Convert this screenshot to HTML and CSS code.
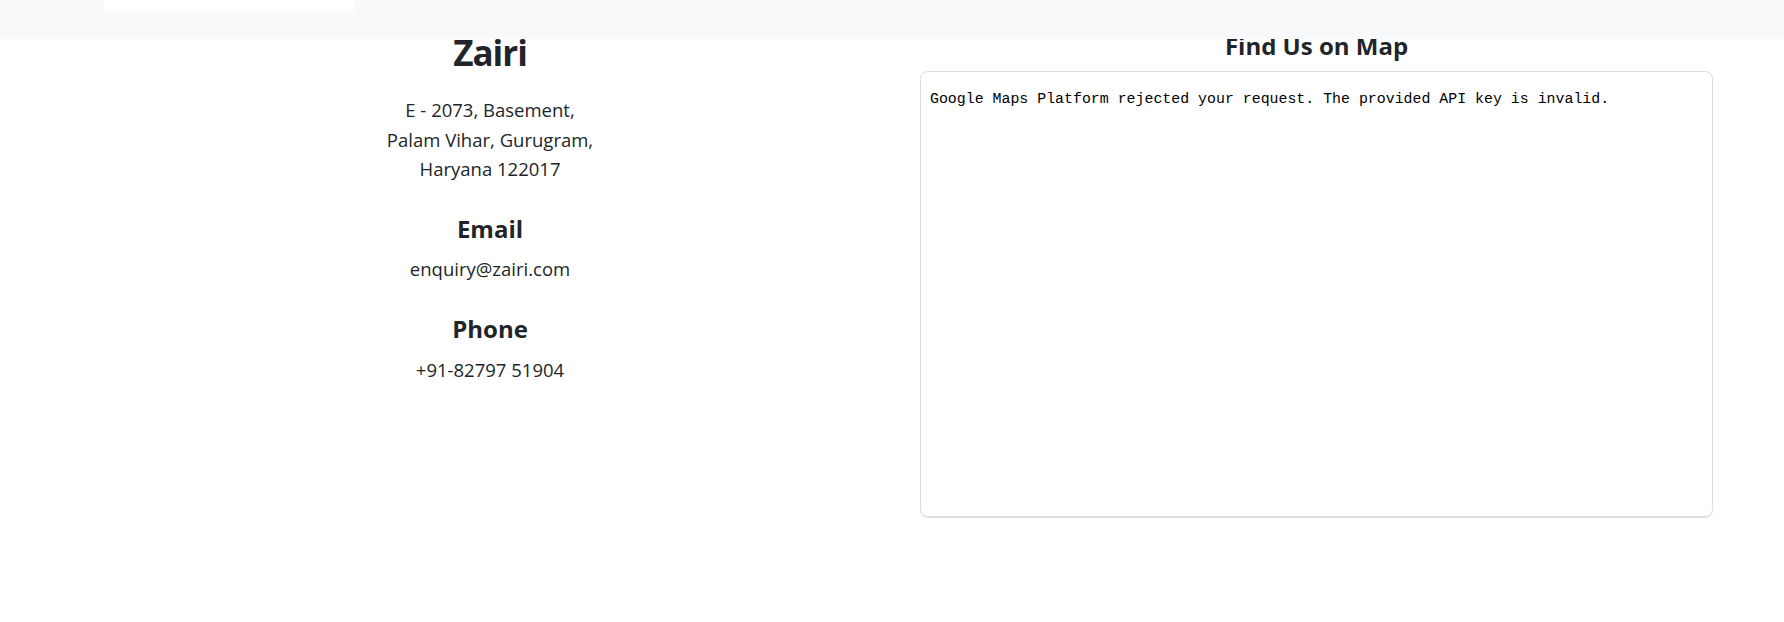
FILE: index.html
```html
<!DOCTYPE html>
<html lang="en">
<head>
<meta charset="utf-8">
<title>Contact - Zairi</title>
<link rel="stylesheet" href="styles.css">
</head>
<body>
<header class="topband">
  <div class="card-tail"></div>
</header>
<section class="contact">
  <div class="info">
    <h1 class="brand">Zairi</h1>
    <p class="text">E - 2073, Basement,<br>Palam Vihar, Gurugram,<br>Haryana 122017</p>
    <h4 class="label">Email</h4>
    <p class="text">enquiry@zairi.com</p>
    <h4 class="label">Phone</h4>
    <p class="text">+91-82797 51904</p>
  </div>
  <div class="map">
    <h3 class="label">Find Us on Map</h3>
    <div class="map-frame">
      <pre class="map-error">Google Maps Platform rejected your request. The provided API key is invalid.</pre>
    </div>
  </div>
</section>
</body>
</html>
```
FILE: styles.css
```css
html, body {
  margin: 0;
  padding: 0;
  background: #ffffff;
}
body {
  font-family: "Open Sans", "Noto Sans", sans-serif;
  color: #212529;
  height: 622px;
  overflow: hidden;
  position: relative;
}
.topband {
  position: absolute;
  top: 0;
  left: 0;
  right: 0;
  height: 39px;
  background: #f8f9fa;
  z-index: 2;
}
.card-tail {
  margin-left: 104px;
  width: 250px;
  height: 12px;
  background: #ffffff;
}
.contact {
  display: grid;
  grid-template-columns: 780px 793px;
  column-gap: 40px;
  padding-left: 100px;
  padding-top: 29px;
}
.info {
  text-align: center;
}
.brand {
  margin: 0 0 18px;
  font-size: 35px;
  line-height: 48px;
  font-weight: 700;
  letter-spacing: -1px;
}
.text {
  margin: 0 0 31px;
  font-size: 18.5px;
  line-height: 29.5px;
}
.label {
  margin: 0 0 11px;
  font-size: 24px;
  line-height: 28.8px;
  font-weight: 700;
}
.map {
  padding-top: 3px;
  text-align: center;
}
.map .label {
  margin-bottom: 10px;
}
.map-frame {
  height: 444px;
  border: 1px solid #dddddd;
  border-radius: 8px;
  box-shadow: 0 1px 0 #dddddd;
  text-align: left;
  overflow: hidden;
}
.map-error {
  margin: 0;
  padding: 19px 10px 0 9px;
  font-family: "Liberation Mono", "DejaVu Sans Mono", monospace;
  font-size: 14.9px;
  color: #000000;
}
```
